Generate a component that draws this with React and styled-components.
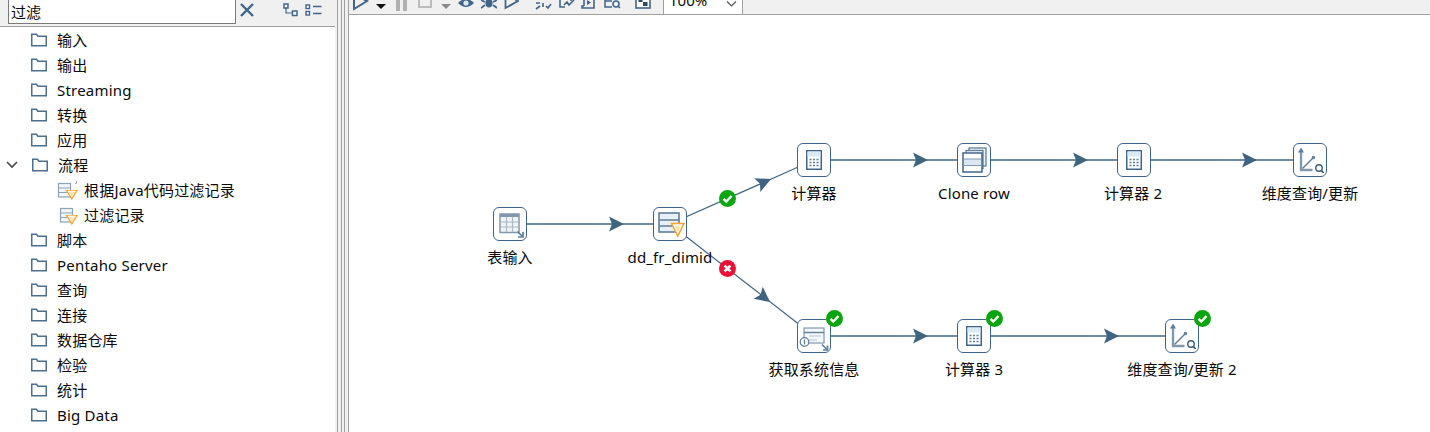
import React from 'react';
import styled, {createGlobalStyle} from 'styled-components';

const STEEL = '#41658a';
const LINE = '#3f6482';
const FONT = `"Noto Sans", "Noto Sans CJK SC", sans-serif`;

const GlobalStyle = createGlobalStyle`
	html, body {
		margin: 0;
		padding: 0;
		background: #fff;
	}
	body {
		font-family: ${FONT};
		color: #0a0a0a;
	}
`;

const Page = styled.div`
	width: 1430px;
	height: 432px;
	display: flex;
	overflow: hidden;
	background: #fff;
`;

const Sidebar = styled.div`
	width: 335px;
	flex: none;
	display: flex;
	flex-direction: column;
`;

const SearchBar = styled.div`
	height: 26px;
	flex: none;
	display: flex;
	align-items: flex-start;
	background: #f0f0f0;
	border-bottom: 1px solid #a0a0a0;
	padding-left: 8px;
`;

const SearchInput = styled.div`
	width: 228px;
	height: 25px;
	box-sizing: border-box;
	margin-top: -1px;
	background: #fff;
	border: 1px solid #7a7a7a;
	font-size: 15px;
	line-height: 24px;
	padding-left: 2px;
`;

const BarIcon = styled.svg`
	display: block;
	flex: none;
	margin-left: ${p => p.$gap}px;
	margin-top: ${p => p.$top}px;
`;

const Tree = styled.div`
	display: flex;
	flex-direction: column;
`;

const Row = styled.div`
	height: 25px;
	display: flex;
	align-items: center;
	padding-left: ${p => p.$indent}px;
	font-size: 15px;
	letter-spacing: 0.2px;
	white-space: nowrap;
`;

const RowIcon = styled.svg`
	display: block;
	flex: none;
	margin-right: ${p => p.$gap}px;
`;

const Divider = styled.div`
	width: 14px;
	flex: none;
	box-sizing: border-box;
	background: #f0f0f0;
	display: flex;
	padding-left: 2px;
`;

const DividerLine = styled.div`
	width: 1px;
	margin-left: ${p => p.$gap}px;
	background: #a0a0a0;
`;

const Main = styled.div`
	flex: 1;
	display: flex;
	flex-direction: column;
	min-width: 0;
`;

const Toolbar = styled.div`
	height: 14px;
	flex: none;
	display: flex;
	align-items: flex-end;
	background: #f0f0f0;
	border-bottom: 1px solid #a0a0a0;
	padding-left: 1px;
	overflow: hidden;
`;

const ToolIcon = styled.svg`
	display: block;
	flex: none;
	margin-left: ${p => p.$gap || 0}px;
	margin-bottom: 3px;
`;

const Combo = styled.div`
	width: 80px;
	height: 26px;
	flex: none;
	box-sizing: border-box;
	margin-left: 12px;
	position: relative;
	background: #fff;
	border-left: 1px solid #a0a0a0;
	border-right: 1px solid #a0a0a0;
	font-size: 15px;
	line-height: 24px;
	padding-left: 5px;
	align-self: flex-end;
`;

const ComboArrow = styled.svg`
	position: absolute;
	right: 5px;
	bottom: 7px;
`;

const Canvas = styled.div`
	position: relative;
	flex: 1;
	background: #fff;
`;

const Hops = styled.svg`
	position: absolute;
	left: 0;
	top: 0;
`;

const Step = styled.div`
	position: absolute;
	width: 34px;
	height: 34px;
	box-sizing: border-box;
	background: #fff;
	border: 1.5px solid ${STEEL};
	border-radius: 6px;
	display: flex;
	align-items: center;
	justify-content: center;
`;

const StepLabel = styled.div`
	position: absolute;
	transform: translateX(-50%);
	font-size: 15px;
	line-height: 20px;
	letter-spacing: 0.15px;
	white-space: nowrap;
`;

const Badge = styled.svg`
	position: absolute;
	display: block;
`;

const Folder = () => (
	<RowIcon $gap={10} width="16" height="14" viewBox="0 0 16 14">
		<path d="M0.75 12.75V1.25H5.5L6.8 3.25H15.25V12.75Z" fill="#fff" stroke="#4a6f8f" strokeWidth="1.5" />
	</RowIcon>
);

const Chevron = () => (
	<RowIcon $gap={14} width="12" height="8" viewBox="0 0 12 8">
		<path d="M1 1L6 6L11 1" fill="none" stroke="#4d4d4d" strokeWidth="1.7" />
	</RowIcon>
);

const FilterIcon = ({code}) => (
	<RowIcon $gap={5} width="22" height="20" viewBox="0 0 22 20">
		{code && <path d="M18 3.5h1.5v-2.5" fill="none" stroke="#9db2c3" strokeWidth="1" />}
		<g transform={code ? '' : 'translate(2 0)'}>
			<rect x="1.5" y="3.5" width="12" height="13.5" fill="#f2f6f9" stroke="#8aa4b8" strokeWidth="1.2" />
			<path d="M1.5 8H13.5M1.5 12.5H13.5" stroke="#8aa4b8" strokeWidth="1.2" />
		</g>
		<path d="M9.5 10.5H20L14.8 19Z" fill="#ffe7bd" stroke="#f3a431" strokeWidth="1.2" />
		<path d="M11 11.2H18.5" stroke="#fff" strokeWidth="1" />
	</RowIcon>
);

const Calculator = () => (
	<svg width="16" height="20" viewBox="0 0 16 20">
		<rect x="0.75" y="0.75" width="14.5" height="18.5" fill="#fff" stroke={STEEL} strokeWidth="1.5" />
		<rect x="1.5" y="1.5" width="13" height="5" fill="#dce8f1" />
		<path d="M3.5 9.5h2M7 9.5h2M10.5 9.5h2M3.5 12.5h2M7 12.5h2M10.5 12.5h2M3.5 15.5h2M7 15.5h2M10.5 15.5h2" stroke="#5a7a96" strokeWidth="1.3" />
	</svg>
);

const DimIcon = () => (
	<svg width="28" height="28" viewBox="0 0 28 28">
		<path d="M5 5V24H16.5" fill="none" stroke="#7f98ad" strokeWidth="2.4" />
		<path d="M5 1.5L2 6.5H8Z" fill="#5f7f99" />
		<path d="M6.5 22.5L17 12" fill="none" stroke="#5f7f99" strokeWidth="1.5" />
		<circle cx="17.5" cy="11.5" r="1.7" fill="#5f7f99" />
		<circle cx="23" cy="22" r="3.2" fill="#fff" stroke="#3f5f7a" strokeWidth="1.4" />
		<path d="M25.2 24.4L27.5 26.8" stroke="#3f5f7a" strokeWidth="1.7" />
	</svg>
);

const TableInIcon = () => (
	<svg width="28" height="28" viewBox="0 0 28 28">
		<rect x="4" y="4" width="19" height="18.5" fill="#f0f4f7" stroke="#7f98ad" strokeWidth="1.5" />
		<rect x="4" y="4" width="19" height="3" fill="#7f98ad" />
		<path d="M4 12H23M4 17H23M10.5 7V22M16.5 7V22" stroke="#a9bac8" strokeWidth="1.2" />
		<path d="M21.5 21.5L27 27M27 22V27H22" fill="#fff" stroke="#5f7f99" strokeWidth="1.7" />
	</svg>
);

const FilterStepIcon = () => (
	<svg width="30" height="30" viewBox="0 0 30 30">
		<rect x="4" y="4" width="20" height="19" fill="#e6f0f6" stroke="#5f7f99" strokeWidth="1.6" />
		<path d="M4 11H24M4 17H24" stroke="#5f7f99" strokeWidth="1.6" />
		<path d="M16.5 14.5H29L22.8 27Z" fill="#fff" stroke="#f3a431" strokeWidth="1.5" />
		<path d="M19.5 17H26L22.8 23.5Z" fill="#ffe3b0" />
	</svg>
);

const CloneIcon = () => (
	<svg width="26" height="26" viewBox="0 0 26 26">
		<rect x="8" y="1" width="17" height="18" fill="#eef3f7" stroke="#5f7f99" strokeWidth="1.3" />
		<rect x="5" y="3.5" width="17" height="18" fill="#eef3f7" stroke="#5f7f99" strokeWidth="1.3" />
		<rect x="2" y="6" width="19" height="19" fill="#fff" stroke={STEEL} strokeWidth="1.5" />
		<rect x="3" y="12" width="17" height="6" fill="#dce8f1" />
		<path d="M2 12H21M2 18.5H21" stroke="#7f98ad" strokeWidth="1.2" />
	</svg>
);

const SysInfoIcon = () => (
	<svg width="30" height="30" viewBox="0 0 30 30">
		<rect x="5" y="7" width="20" height="15" fill="#f5f8fb" stroke="#7f98ad" strokeWidth="1.2" />
		<path d="M5 11.5H25" stroke="#5f7f99" strokeWidth="1.4" />
		<path d="M10 15H22M10 19H18" stroke="#d3e0ea" strokeWidth="2" />
		<circle cx="5.5" cy="21" r="4.3" fill="#fff" stroke="#5f7f99" strokeWidth="1.2" />
		<path d="M5.5 18.5V23.5" stroke="#5f7f99" strokeWidth="1.3" />
		<path d="M23 23.5L28.5 29M28.5 24.5V29H24" fill="none" stroke="#5f7f99" strokeWidth="1.7" />
	</svg>
);

const OkBadge = ({x, y}) => (
	<Badge style={{left: x, top: y}} width="17" height="17" viewBox="0 0 17 17">
		<circle cx="8.5" cy="8.5" r="8.5" fill="#0aa60f" />
		<path d="M4.5 8.8L7.3 11.5L12.5 6" fill="none" stroke="#fff" strokeWidth="2.4" />
	</Badge>
);

const ErrorBadge = ({x, y}) => (
	<Badge style={{left: x, top: y}} width="17" height="17" viewBox="0 0 17 17">
		<circle cx="8.5" cy="8.5" r="8.5" fill="#ea1235" />
		<path d="M5.6 5.6L11.4 11.4M11.4 5.6L5.6 11.4" fill="none" stroke="#fff" strokeWidth="2.6" />
	</Badge>
);

// canvas starts at x=349 y=15
const OX = 349;
const OY = 15;

const steps = [
	{x: 493, y: 207, label: '表输入', cx: 510, ly: 247, icon: <TableInIcon />},
	{x: 653, y: 207, label: 'dd_fr_dimid', cx: 670, ly: 247, icon: <FilterStepIcon />},
	{x: 797, y: 143, label: '计算器', cx: 814, ly: 183, icon: <Calculator />},
	{x: 957, y: 143, label: 'Clone row', cx: 974, ly: 183, icon: <CloneIcon />},
	{x: 1117, y: 143, label: '计算器 2', cx: 1133, ly: 183, icon: <Calculator />},
	{x: 1293, y: 143, label: '维度查询/更新', cx: 1310, ly: 183, icon: <DimIcon />},
	{x: 797, y: 319, label: '获取系统信息', cx: 814, ly: 359, icon: <SysInfoIcon />},
	{x: 957, y: 319, label: '计算器 3', cx: 974, ly: 359, icon: <Calculator />},
	{x: 1165, y: 319, label: '维度查询/更新 2', cx: 1182, ly: 359, icon: <DimIcon />},
];

// hops run centre to centre, the steps sit on top of them
const hops = [
	{from: [510, 224], to: [670, 224], tip: [624, 224], thick: true},
	{from: [670, 224], to: [814, 160], tip: [771, 179]},
	{from: [670, 224], to: [814, 336], tip: [770, 302]},
	{from: [814, 160], to: [974, 160], tip: [928, 160], thick: true},
	{from: [974, 160], to: [1134, 160], tip: [1088, 160], thick: true},
	{from: [1134, 160], to: [1310, 160], tip: [1257, 160], thick: true},
	{from: [814, 336], to: [974, 336], tip: [928, 336], thick: true},
	{from: [974, 336], to: [1182, 336], tip: [1119, 336], thick: true},
];

const Arrowhead = ({from, to, tip}) => {
	const a = Math.atan2(to[1] - from[1], to[0] - from[0]);
	const deg = (a * 180) / Math.PI;
	return (
		<path
			d="M0 0L-15 -7.5L-12 0L-15 7.5Z"
			fill={LINE}
			transform={`translate(${tip[0] - OX} ${tip[1] - OY}) rotate(${deg})`}
		/>
	);
};

const folders = [
	{name: '输入'},
	{name: '输出'},
	{name: 'Streaming'},
	{name: '转换'},
	{name: '应用'},
	{name: '流程', open: true},
	{name: '根据Java代码过滤记录', leaf: true, code: true},
	{name: '过滤记录', leaf: true},
	{name: '脚本'},
	{name: 'Pentaho Server'},
	{name: '查询'},
	{name: '连接'},
	{name: '数据仓库'},
	{name: '检验'},
	{name: '统计'},
	{name: 'Big Data'},
];

const TreeRow = ({item}) => {
	if (item.leaf) {
		return (
			<Row $indent={57}>
				<FilterIcon code={item.code} />
				{item.name}
			</Row>
		);
	}
	return (
		<Row $indent={item.open ? 6 : 31}>
			{item.open && <Chevron />}
			<Folder />
			{item.name}
		</Row>
	);
};

export default function App() {
	return (
		<Page>
			<GlobalStyle />
			<Sidebar>
				<SearchBar>
					<SearchInput>过滤</SearchInput>
					<BarIcon $gap={4} $top={3} width="14" height="14" viewBox="0 0 14 14">
						<path d="M1 1L13 13M13 1L1 13" stroke={STEEL} strokeWidth="2.4" />
					</BarIcon>
					<BarIcon $gap={29} $top={3} width="15" height="14" viewBox="0 0 15 14">
						<path d="M3 4V10H9" fill="none" stroke={STEEL} strokeWidth="1.2" />
						<rect x="1" y="1" width="4" height="4" fill="#fff" stroke={STEEL} strokeWidth="1.5" />
						<rect x="9.5" y="8" width="4.5" height="4.5" fill="#fff" stroke={STEEL} strokeWidth="1.5" />
					</BarIcon>
					<BarIcon $gap={7} $top={4} width="17" height="12" viewBox="0 0 17 12">
						<rect x="1" y="1" width="3.5" height="3.5" fill="#fff" stroke={STEEL} strokeWidth="1.4" />
						<rect x="1" y="7.5" width="3.5" height="3.5" fill="#fff" stroke={STEEL} strokeWidth="1.4" />
						<path d="M8 2.5H16.5M8 9.5H16.5" stroke={STEEL} strokeWidth="1.4" />
					</BarIcon>
				</SearchBar>
				<Tree>
					{folders.map(item => (
						<TreeRow key={item.name} item={item} />
					))}
				</Tree>
			</Sidebar>
			<Divider>
				<DividerLine $gap={0} />
				<DividerLine $gap={3} />
				<DividerLine $gap={2} />
				<DividerLine $gap={3} />
			</Divider>
			<Main>
				<Toolbar>
					<ToolIcon $gap={2} width="17" height="14" viewBox="0 0 17 14">
						<path d="M2 -3V12L15 4L2 -3Z" fill="none" stroke={STEEL} strokeWidth="2" />
					</ToolIcon>
					<ToolIcon $gap={7} width="10" height="9" viewBox="0 0 10 9">
						<path d="M0 2H10L5 7Z" fill="#111" />
					</ToolIcon>
					<ToolIcon $gap={10} width="12" height="14" viewBox="0 0 12 14">
						<path d="M0 0H4V14H0ZM7 0H11V14H7Z" fill="#b0b0b0" />
					</ToolIcon>
					<ToolIcon $gap={10} width="14" height="14" viewBox="0 0 14 14">
						<rect x="1" y="-3" width="12" height="13" fill="none" stroke="#b0b0b0" strokeWidth="1.6" />
					</ToolIcon>
					<ToolIcon $gap={9} width="10" height="9" viewBox="0 0 10 9">
						<path d="M0 2H10L5 7Z" fill="#8a8a8a" />
					</ToolIcon>
					<ToolIcon $gap={7} width="16" height="12" viewBox="0 0 16 12">
						<path d="M0 4Q8 -4 16 4Q8 12 0 4Z" fill={STEEL} />
						<circle cx="8" cy="4" r="2.6" fill="#dfe7ee" />
					</ToolIcon>
					<ToolIcon $gap={7} width="16" height="14" viewBox="0 0 16 14">
						<ellipse cx="8" cy="6" rx="3.6" ry="4.6" fill={STEEL} />
						<path d="M0 3L4 5M16 3L12 5M0 11L4 8M16 11L12 8" stroke={STEEL} strokeWidth="1.8" />
					</ToolIcon>
					<ToolIcon $gap={7} width="15" height="14" viewBox="0 0 15 14">
						<path d="M1.5 -3V11L14 4L1.5 -3Z" fill="none" stroke={STEEL} strokeWidth="1.8" />
					</ToolIcon>
					<ToolIcon $gap={16} width="17" height="14" viewBox="0 0 17 14">
						<path d="M1 2H5M8 2H12M1 6H5M8 6V10M5 9L1 12M11 9L13 11L16 7" fill="none" stroke={STEEL} strokeWidth="1.6" />
					</ToolIcon>
					<ToolIcon $gap={7} width="16" height="14" viewBox="0 0 16 14">
						<path d="M1 0V10H6M12 0V4M5 8L8 5L10 8L15 3" fill="none" stroke={STEEL} strokeWidth="1.6" />
					</ToolIcon>
					<ToolIcon $gap={6} width="15" height="14" viewBox="0 0 15 14">
						<path d="M3 0V9M13 0V11H1V9H3" fill="none" stroke={STEEL} strokeWidth="1.6" />
						<path d="M6 3L10 5.5L6 8Z" fill={STEEL} />
					</ToolIcon>
					<ToolIcon $gap={8} width="17" height="14" viewBox="0 0 17 14">
						<path d="M1 0V10H8M1 4H8" fill="none" stroke={STEEL} strokeWidth="1.5" />
						<circle cx="12" cy="7" r="3" fill="none" stroke={STEEL} strokeWidth="1.5" />
						<path d="M14 9L16 11" stroke={STEEL} strokeWidth="1.6" />
					</ToolIcon>
					<ToolIcon $gap={14} width="16" height="14" viewBox="0 0 16 14">
						<rect x="1" y="-3" width="14" height="14" fill="#fff" stroke={STEEL} strokeWidth="1.6" />
						<rect x="3.5" y="1" width="4" height="4" fill="#2f4a62" />
						<rect x="8" y="5" width="4.5" height="4" fill="#2f4a62" />
					</ToolIcon>
					<Combo>
						100%
						<ComboArrow width="11" height="6" viewBox="0 0 11 6">
							<path d="M1 0.5L5.5 5L10 0.5" fill="none" stroke="#555" strokeWidth="1.2" />
						</ComboArrow>
					</Combo>
				</Toolbar>
				<Canvas>
					<Hops width="1081" height="417" viewBox="0 0 1081 417">
						{hops.map((h, i) => (
							<g key={i}>
								<line
									x1={h.from[0] - OX}
									y1={h.from[1] - OY}
									x2={h.to[0] - OX}
									y2={h.to[1] - OY}
									stroke={LINE}
									strokeWidth={h.thick ? 1.4 : 1.2}
								/>
								<Arrowhead {...h} />
							</g>
						))}
					</Hops>
					{steps.map(s => (
						<React.Fragment key={s.label}>
							<Step style={{left: s.x - OX, top: s.y - OY}}>{s.icon}</Step>
							<StepLabel style={{left: s.cx - OX, top: s.ly - OY}}>{s.label}</StepLabel>
						</React.Fragment>
					))}
					<OkBadge x={719 - OX} y={190 - OY} />
					<ErrorBadge x={719 - OX} y={260 - OY} />
					<OkBadge x={826 - OX} y={310 - OY} />
					<OkBadge x={986 - OX} y={310 - OY} />
					<OkBadge x={1194 - OX} y={310 - OY} />
				</Canvas>
			</Main>
		</Page>
	);
}
